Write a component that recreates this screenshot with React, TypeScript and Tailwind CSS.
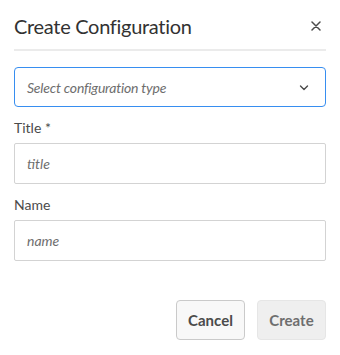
import React from 'react';

const font = { fontFamily: '"Lato", "Open Sans", sans-serif' };

const ChevronDown = () => (
    <svg width="10" height="10" viewBox="0 0 10 10" fill="none">
        <path d="M1.5 3 L5 6.5 L8.5 3" stroke="#4b4b4b" strokeWidth="1.4" strokeLinecap="round" strokeLinejoin="round" />
    </svg>
);

const CloseIcon = () => (
    <svg width="10" height="10" viewBox="0 0 10 10" fill="none">
        <path d="M1 1 L9 9 M9 1 L1 9" stroke="#4b4b4b" strokeWidth="1.5" strokeLinecap="round" />
    </svg>
);

export default function App() {
    return (
        <div className="w-[340px] h-[355px] bg-white px-[14px] text-[#4b4b4b]" style={font}>
            <div className="h-[51px] flex items-center justify-between border-b-2 border-[#ebebeb]">
                <h3 className="text-[20px] text-[#323232] leading-none pt-[2px] tracking-[-0.3px]">Create Configuration</h3>
                <button className="w-6 h-6 flex items-center justify-center mr-[-2px] mt-[2px]">
                    <CloseIcon />
                </button>
            </div>

            <button className="mt-[16px] w-full h-[40px] flex items-center justify-between px-[12px] border border-[#378ef0] rounded-[4px] bg-white">
                <span className="italic text-[14px] text-[#6e6e6e] tracking-[-0.2px]">Select configuration type</span>
                <span className="mr-[4px] mt-[1px]"><ChevronDown /></span>
            </button>

            <div className="mt-[12px] text-[14px] text-[#4b4b4b] leading-[18px]">Title *</div>
            <div className="mt-[6px] h-[41px] border border-[#d3d3d3] rounded-[2px] flex items-center px-[12px]">
                <span className="italic text-[14px] text-[#6e6e6e]">title</span>
            </div>

            <div className="mt-[12px] text-[14px] text-[#4b4b4b] leading-[18px]">Name</div>
            <div className="mt-[6px] h-[41px] border border-[#d3d3d3] rounded-[2px] flex items-center px-[12px]">
                <span className="italic text-[14px] text-[#6e6e6e]">name</span>
            </div>

            <div className="mt-[39px] flex justify-end gap-[12px]">
                <button className="w-[69px] h-[40px] rounded-[4px] border border-[#cacaca] bg-[#f8f8f8] text-[15px] font-bold text-[#4b4b4b]">
                    Cancel
                </button>
                <button className="w-[69px] h-[40px] rounded-[4px] border border-[#e6e6e6] bg-[#efefef] text-[15px] font-bold text-[#6e6e6e]">
                    Create
                </button>
            </div>
        </div>
    );
}
